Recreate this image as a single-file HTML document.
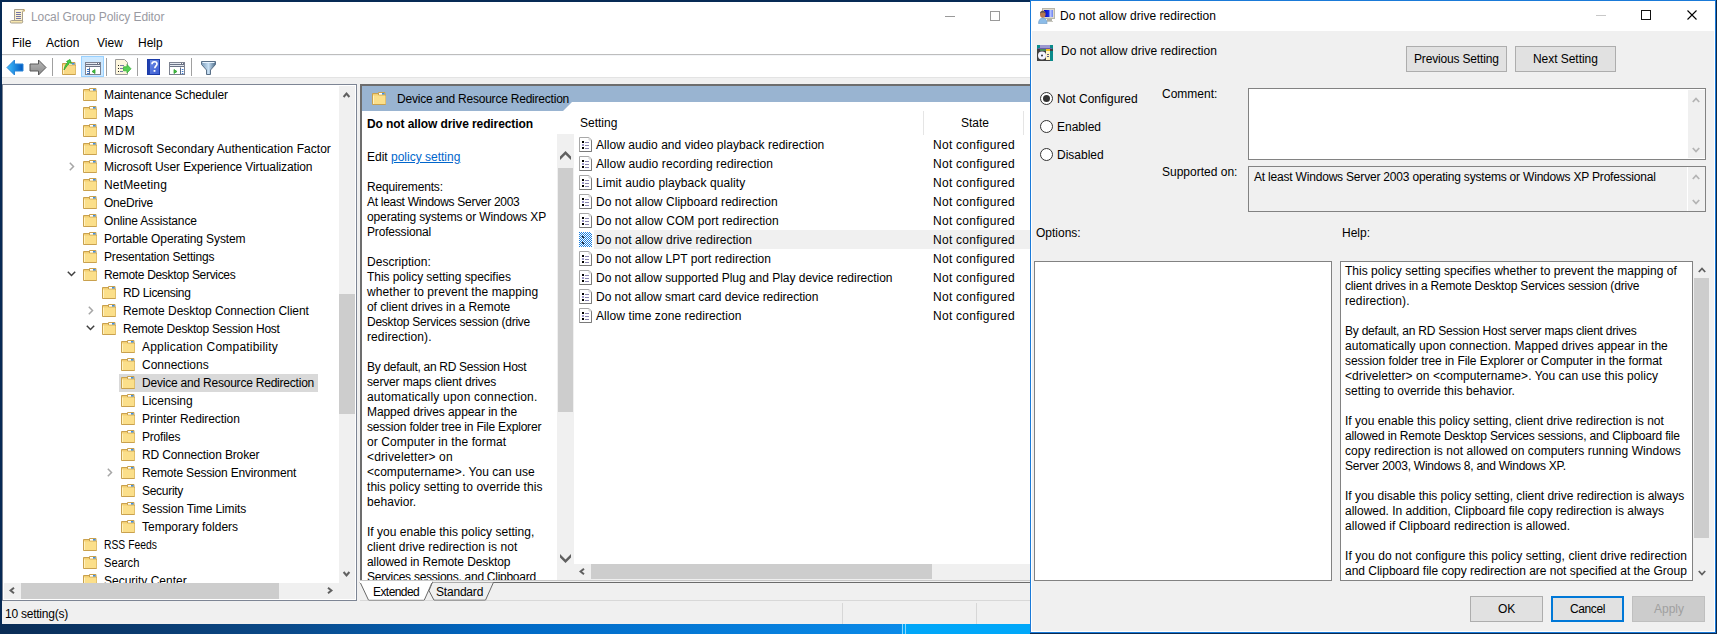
<!DOCTYPE html><html><head><meta charset="utf-8"><title>Local Group Policy Editor</title><style>
*{margin:0;padding:0;box-sizing:border-box}
html,body{width:1717px;height:634px;overflow:hidden;background:#0b3a6e}
body{position:relative;font-family:"Liberation Sans",sans-serif;font-size:12px;color:#000}
div,svg{position:absolute}
svg{overflow:visible}
.t{white-space:nowrap;line-height:15px;font-size:12px}
</style></head><body>
<div style="left:0px;top:624px;width:1717px;height:10px;background:linear-gradient(90deg,#0a2c55 0px,#0a4a8a 290px,#0068c4 500px,#0a8ae8 900px,#00a6f8 904px,#00b0ff 1717px)"></div>
<div style="left:902px;top:624px;width:1px;height:10px;background:#8ad8ff"></div>
<div style="left:905px;top:624px;width:1px;height:10px;background:#8ad8ff"></div>
<div style="left:0px;top:0px;width:1030px;height:2px;background:#072a55"></div>
<div style="left:0px;top:0px;width:2px;height:624px;background:#072a55"></div>
<div style="left:2px;top:2px;width:1028px;height:622px;background:#fff"></div>
<div class="t" style="left:31px;top:10px;letter-spacing:-0.083px;color:#999aa2">Local Group Policy Editor</div>
<svg style="left:10px;top:8px;" width="16" height="16" viewBox="0 0 16 16"><path d="M4.5 1.5h9.5l-1.5 2v9.5h-8z" fill="#fbf2d0" stroke="#a89f8c"/><path d="M13.5 1.5a1 1 0 0 1 0 2" fill="none" stroke="#c8a040"/><path d="M1.5 12.5h10a1.2 1.2 0 0 1 0 2.5h-10a1.2 1.2 0 0 1 0-2.5z" fill="#f8e8b0" stroke="#a89f8c"/><path d="M6 4.5h5M6 6.5h5M6 8.5h5M6 10.5h5" stroke="#7474a8" stroke-width="1"/></svg>
<div style="left:945px;top:16px;width:10px;height:1px;background:#999"></div>
<div style="left:990px;top:11px;width:10px;height:10px;border:1px solid #999"></div>
<div class="t" style="left:12px;top:36px;">File</div>
<div class="t" style="left:46px;top:36px;">Action</div>
<div class="t" style="left:97px;top:36px;">View</div>
<div class="t" style="left:138px;top:36px;">Help</div>
<div style="left:2px;top:54px;width:1028px;height:1px;background:#bdbdbd"></div>
<div style="left:2px;top:55px;width:1028px;height:1px;background:#f3f5f8"></div>
<svg style="left:6px;top:59px;" width="18" height="17" viewBox="0 0 18 17"><defs><linearGradient id="gb" x1="0" y1="0" x2="1" y2="0"><stop offset="0" stop-color="#40c0ff"/><stop offset="1" stop-color="#0058c0"/></linearGradient></defs><path d="M1 8.5L8.5 1V5H17V12H8.5V16z" fill="url(#gb)" stroke="#2a86d8" stroke-linejoin="miter"/></svg>
<svg style="left:29px;top:59px;" width="18" height="17" viewBox="0 0 18 17"><defs><linearGradient id="gg" x1="0" y1="0" x2="0" y2="1"><stop offset="0" stop-color="#b8b8b8"/><stop offset="1" stop-color="#8a8a8a"/></linearGradient></defs><path d="M17 8.5L9.5 1V5H1V12H9.5V16z" fill="url(#gg)" stroke="#5a5a5a"/></svg>
<div style="left:52px;top:58px;width:1px;height:18px;background:#a0a0a0"></div>
<svg style="left:62px;top:60px;transform:translate(0,2px)" width="15" height="15" viewBox="0 0 15 15"><path d="M0.5 1.5h5.5l1 1.5h6.5v9.5h-13z" fill="#f3cf73" stroke="#c9a14e"/><path d="M6.5 0.5h6.5v2.5h-6.5z" fill="#f7e3a8" stroke="#c9a14e"/><rect x="7" y="1" width="3" height="1.5" fill="#fff"/><rect x="10" y="1" width="2.5" height="1.5" fill="#3d8fe6"/><rect x="1" y="3.5" width="12.5" height="8.5" fill="#f9d985"/><rect x="1" y="3.5" width="1" height="8.5" fill="#fff2c0"/></svg>
<svg style="left:62px;top:59px;" width="10" height="12" viewBox="0 0 10 12"><path d="M2 11C3 6 5 4 6 3L4.5 2.5L8 0.5L9.5 4.5L7.5 3.8C6.5 5 4.5 7.5 2 11z" fill="#44d044" stroke="#2aa02a" stroke-width="0.8"/></svg>
<div style="left:81px;top:56px;width:23px;height:21px;background:#cce8ff;border:1px solid #99d1ff"></div>
<svg style="left:85px;top:62px;" width="16" height="13" viewBox="0 0 16 13"><rect x="0.5" y="0.5" width="15" height="12" fill="#fff" stroke="#7d8290"/><path d="M1 1.5h10M1 3.5h14" stroke="#e4e8f0"/><path d="M1 2.5h14M1 4.5h14" stroke="#6a7284"/><rect x="12" y="1" width="1" height="1" fill="#6a7284"/><rect x="14" y="1" width="1" height="1" fill="#6a7284"/><path d="M4.5 5.5v7" stroke="#5a6a88"/><path d="M2 7.5h2M2 9.5h2M2 11.5h2" stroke="#3a7ad0" stroke-width="1.2"/><path d="M10 7.5v4l-3-2z" fill="#40c040" stroke="#30a030" stroke-width="0.8"/></svg>
<div style="left:106px;top:58px;width:1px;height:18px;background:#a0a0a0"></div>
<svg style="left:115px;top:59px;" width="17" height="16" viewBox="0 0 17 16"><path d="M0.5 0.5h9l3 3v12h-12z" fill="#fdf6dc" stroke="#9a9a9a"/><path d="M3 6.5h1M3 9.5h1M3 12.5h1" stroke="#202020"/><path d="M5 6.5h4M5 9.5h3M5 12.5h3" stroke="#7a7aa8"/><path d="M8.5 9V7.8L12 7.8V5.5L16 9.8L12 14V11.8H8.5z" fill="#55d055" stroke="#3ab03a" stroke-width="0.8"/></svg>
<div style="left:137px;top:58px;width:1px;height:18px;background:#a0a0a0"></div>
<svg style="left:147px;top:59px;" width="13" height="16" viewBox="0 0 13 16"><defs><linearGradient id="hb" x1="0" y1="0" x2="1" y2="1"><stop offset="0" stop-color="#7090e8"/><stop offset="1" stop-color="#3a5ad0"/></linearGradient></defs><rect x="0.5" y="0.5" width="12" height="15" fill="url(#hb)" stroke="#1a3aa8"/><rect x="1" y="1" width="2" height="14" fill="#2040b0"/><path d="M5 5.2c0-1.6 1.2-2.4 2.5-2.4s2.5 0.8 2.5 2.2c0 1.8-2.2 2-2.2 4.2" fill="none" stroke="#fff" stroke-width="1.6"/><rect x="6.6" y="11" width="1.8" height="1.8" fill="#fff"/></svg>
<svg style="left:169px;top:62px;" width="16" height="13" viewBox="0 0 16 13"><rect x="0.5" y="0.5" width="15" height="12" fill="#fff" stroke="#7d8290"/><path d="M1 1.5h10M1 3.5h14" stroke="#e4e8f0"/><path d="M1 2.5h14M1 4.5h14" stroke="#6a7284"/><rect x="12" y="1" width="1" height="1" fill="#6a7284"/><rect x="14" y="1" width="1" height="1" fill="#6a7284"/><path d="M11.5 5.5v7" stroke="#5a6a88"/><path d="M12.8 7.5h1.6M12.8 9.5h1.6M12.8 11.5h1.6" stroke="#3a7ad0" stroke-width="1.2"/><path d="M5 7.5v4l3-2z" fill="#40c040" stroke="#30a030" stroke-width="0.8"/></svg>
<div style="left:191px;top:58px;width:1px;height:18px;background:#a0a0a0"></div>
<svg style="left:201px;top:61px;" width="15" height="14" viewBox="0 0 15 14"><defs><linearGradient id="fb" x1="0" y1="0" x2="1" y2="0"><stop offset="0" stop-color="#7a9ab8"/><stop offset="0.5" stop-color="#c8e0f4"/><stop offset="1" stop-color="#4a6a88"/></linearGradient></defs><path d="M0.5 0.5h14v3l-5 5.5v4.5h-4v-4.5l-5-5.5z" fill="url(#fb)" stroke="#5a7088"/><path d="M1.5 1.5h12" stroke="#e8f4ff"/></svg>
<div style="left:2px;top:77px;width:1028px;height:1px;background:#e3e3e3"></div>
<div style="left:2px;top:78px;width:1028px;height:6px;background:#f0f0f0"></div>
<div style="left:2px;top:84px;width:355px;height:517px;background:#fff;border:1px solid #7d8594"></div>
<div style="left:2px;top:85px;width:337px;height:498px;overflow:hidden">
<svg style="left:81px;top:3px" width="14" height="13" viewBox="0 0 14 13"><path d="M0.5 1.5h5.5l1 1.5h6.5v9.5h-13z" fill="#f3cf73" stroke="#c9a14e"/><path d="M6.5 0.5h6.5v2.5h-6.5z" fill="#f7e3a8" stroke="#c9a14e"/><rect x="7" y="1" width="3" height="1.5" fill="#fff"/><rect x="10" y="1" width="2.5" height="1.5" fill="#3d8fe6"/><rect x="1" y="3.5" width="12.5" height="8.5" fill="#fbdf8a"/><rect x="1" y="3.5" width="1" height="8.5" fill="#fff2c0"/></svg>
<div class="t" style="left:102px;top:3px;letter-spacing:-0.100px;">Maintenance Scheduler</div>
<svg style="left:81px;top:21px" width="14" height="13" viewBox="0 0 14 13"><path d="M0.5 1.5h5.5l1 1.5h6.5v9.5h-13z" fill="#f3cf73" stroke="#c9a14e"/><path d="M6.5 0.5h6.5v2.5h-6.5z" fill="#f7e3a8" stroke="#c9a14e"/><rect x="7" y="1" width="3" height="1.5" fill="#fff"/><rect x="10" y="1" width="2.5" height="1.5" fill="#3d8fe6"/><rect x="1" y="3.5" width="12.5" height="8.5" fill="#fbdf8a"/><rect x="1" y="3.5" width="1" height="8.5" fill="#fff2c0"/></svg>
<div class="t" style="left:102px;top:21px;letter-spacing:-0.001px;">Maps</div>
<svg style="left:81px;top:39px" width="14" height="13" viewBox="0 0 14 13"><path d="M0.5 1.5h5.5l1 1.5h6.5v9.5h-13z" fill="#f3cf73" stroke="#c9a14e"/><path d="M6.5 0.5h6.5v2.5h-6.5z" fill="#f7e3a8" stroke="#c9a14e"/><rect x="7" y="1" width="3" height="1.5" fill="#fff"/><rect x="10" y="1" width="2.5" height="1.5" fill="#3d8fe6"/><rect x="1" y="3.5" width="12.5" height="8.5" fill="#fbdf8a"/><rect x="1" y="3.5" width="1" height="8.5" fill="#fff2c0"/></svg>
<div class="t" style="left:102px;top:39px;letter-spacing:1.000px;">MDM</div>
<svg style="left:81px;top:57px" width="14" height="13" viewBox="0 0 14 13"><path d="M0.5 1.5h5.5l1 1.5h6.5v9.5h-13z" fill="#f3cf73" stroke="#c9a14e"/><path d="M6.5 0.5h6.5v2.5h-6.5z" fill="#f7e3a8" stroke="#c9a14e"/><rect x="7" y="1" width="3" height="1.5" fill="#fff"/><rect x="10" y="1" width="2.5" height="1.5" fill="#3d8fe6"/><rect x="1" y="3.5" width="12.5" height="8.5" fill="#fbdf8a"/><rect x="1" y="3.5" width="1" height="8.5" fill="#fff2c0"/></svg>
<div class="t" style="left:102px;top:57px;letter-spacing:0.035px;">Microsoft Secondary Authentication Factor</div>
<svg style="left:81px;top:75px" width="14" height="13" viewBox="0 0 14 13"><path d="M0.5 1.5h5.5l1 1.5h6.5v9.5h-13z" fill="#f3cf73" stroke="#c9a14e"/><path d="M6.5 0.5h6.5v2.5h-6.5z" fill="#f7e3a8" stroke="#c9a14e"/><rect x="7" y="1" width="3" height="1.5" fill="#fff"/><rect x="10" y="1" width="2.5" height="1.5" fill="#3d8fe6"/><rect x="1" y="3.5" width="12.5" height="8.5" fill="#fbdf8a"/><rect x="1" y="3.5" width="1" height="8.5" fill="#fff2c0"/></svg>
<div class="t" style="left:102px;top:75px;letter-spacing:-0.103px;">Microsoft User Experience Virtualization</div>
<svg style="left:67px;top:77px" width="6" height="9" viewBox="0 0 6 9"><path d="M0.8 0.8L4.5 4.5L0.8 8.2" fill="none" stroke="#a6a6a6" stroke-width="1.5"/></svg>
<svg style="left:81px;top:93px" width="14" height="13" viewBox="0 0 14 13"><path d="M0.5 1.5h5.5l1 1.5h6.5v9.5h-13z" fill="#f3cf73" stroke="#c9a14e"/><path d="M6.5 0.5h6.5v2.5h-6.5z" fill="#f7e3a8" stroke="#c9a14e"/><rect x="7" y="1" width="3" height="1.5" fill="#fff"/><rect x="10" y="1" width="2.5" height="1.5" fill="#3d8fe6"/><rect x="1" y="3.5" width="12.5" height="8.5" fill="#fbdf8a"/><rect x="1" y="3.5" width="1" height="8.5" fill="#fff2c0"/></svg>
<div class="t" style="left:102px;top:93px;letter-spacing:0.165px;">NetMeeting</div>
<svg style="left:81px;top:111px" width="14" height="13" viewBox="0 0 14 13"><path d="M0.5 1.5h5.5l1 1.5h6.5v9.5h-13z" fill="#f3cf73" stroke="#c9a14e"/><path d="M6.5 0.5h6.5v2.5h-6.5z" fill="#f7e3a8" stroke="#c9a14e"/><rect x="7" y="1" width="3" height="1.5" fill="#fff"/><rect x="10" y="1" width="2.5" height="1.5" fill="#3d8fe6"/><rect x="1" y="3.5" width="12.5" height="8.5" fill="#fbdf8a"/><rect x="1" y="3.5" width="1" height="8.5" fill="#fff2c0"/></svg>
<div class="t" style="left:102px;top:111px;letter-spacing:-0.215px;">OneDrive</div>
<svg style="left:81px;top:129px" width="14" height="13" viewBox="0 0 14 13"><path d="M0.5 1.5h5.5l1 1.5h6.5v9.5h-13z" fill="#f3cf73" stroke="#c9a14e"/><path d="M6.5 0.5h6.5v2.5h-6.5z" fill="#f7e3a8" stroke="#c9a14e"/><rect x="7" y="1" width="3" height="1.5" fill="#fff"/><rect x="10" y="1" width="2.5" height="1.5" fill="#3d8fe6"/><rect x="1" y="3.5" width="12.5" height="8.5" fill="#fbdf8a"/><rect x="1" y="3.5" width="1" height="8.5" fill="#fff2c0"/></svg>
<div class="t" style="left:102px;top:129px;letter-spacing:-0.155px;">Online Assistance</div>
<svg style="left:81px;top:147px" width="14" height="13" viewBox="0 0 14 13"><path d="M0.5 1.5h5.5l1 1.5h6.5v9.5h-13z" fill="#f3cf73" stroke="#c9a14e"/><path d="M6.5 0.5h6.5v2.5h-6.5z" fill="#f7e3a8" stroke="#c9a14e"/><rect x="7" y="1" width="3" height="1.5" fill="#fff"/><rect x="10" y="1" width="2.5" height="1.5" fill="#3d8fe6"/><rect x="1" y="3.5" width="12.5" height="8.5" fill="#fbdf8a"/><rect x="1" y="3.5" width="1" height="8.5" fill="#fff2c0"/></svg>
<div class="t" style="left:102px;top:147px;letter-spacing:-0.104px;">Portable Operating System</div>
<svg style="left:81px;top:165px" width="14" height="13" viewBox="0 0 14 13"><path d="M0.5 1.5h5.5l1 1.5h6.5v9.5h-13z" fill="#f3cf73" stroke="#c9a14e"/><path d="M6.5 0.5h6.5v2.5h-6.5z" fill="#f7e3a8" stroke="#c9a14e"/><rect x="7" y="1" width="3" height="1.5" fill="#fff"/><rect x="10" y="1" width="2.5" height="1.5" fill="#3d8fe6"/><rect x="1" y="3.5" width="12.5" height="8.5" fill="#fbdf8a"/><rect x="1" y="3.5" width="1" height="8.5" fill="#fff2c0"/></svg>
<div class="t" style="left:102px;top:165px;letter-spacing:-0.175px;">Presentation Settings</div>
<svg style="left:81px;top:183px" width="14" height="13" viewBox="0 0 14 13"><path d="M0.5 1.5h5.5l1 1.5h6.5v9.5h-13z" fill="#f3cf73" stroke="#c9a14e"/><path d="M6.5 0.5h6.5v2.5h-6.5z" fill="#f7e3a8" stroke="#c9a14e"/><rect x="7" y="1" width="3" height="1.5" fill="#fff"/><rect x="10" y="1" width="2.5" height="1.5" fill="#3d8fe6"/><rect x="1" y="3.5" width="12.5" height="8.5" fill="#fbdf8a"/><rect x="1" y="3.5" width="1" height="8.5" fill="#fff2c0"/></svg>
<div class="t" style="left:102px;top:183px;letter-spacing:-0.318px;">Remote Desktop Services</div>
<svg style="left:65px;top:186px" width="9" height="6" viewBox="0 0 9 6"><path d="M0.8 0.8L4.5 4.5L8.2 0.8" fill="none" stroke="#404040" stroke-width="1.5"/></svg>
<svg style="left:100px;top:201px" width="14" height="13" viewBox="0 0 14 13"><path d="M0.5 1.5h5.5l1 1.5h6.5v9.5h-13z" fill="#f3cf73" stroke="#c9a14e"/><path d="M6.5 0.5h6.5v2.5h-6.5z" fill="#f7e3a8" stroke="#c9a14e"/><rect x="7" y="1" width="3" height="1.5" fill="#fff"/><rect x="10" y="1" width="2.5" height="1.5" fill="#3d8fe6"/><rect x="1" y="3.5" width="12.5" height="8.5" fill="#fbdf8a"/><rect x="1" y="3.5" width="1" height="8.5" fill="#fff2c0"/></svg>
<div class="t" style="left:121px;top:201px;letter-spacing:-0.318px;">RD Licensing</div>
<svg style="left:100px;top:219px" width="14" height="13" viewBox="0 0 14 13"><path d="M0.5 1.5h5.5l1 1.5h6.5v9.5h-13z" fill="#f3cf73" stroke="#c9a14e"/><path d="M6.5 0.5h6.5v2.5h-6.5z" fill="#f7e3a8" stroke="#c9a14e"/><rect x="7" y="1" width="3" height="1.5" fill="#fff"/><rect x="10" y="1" width="2.5" height="1.5" fill="#3d8fe6"/><rect x="1" y="3.5" width="12.5" height="8.5" fill="#fbdf8a"/><rect x="1" y="3.5" width="1" height="8.5" fill="#fff2c0"/></svg>
<div class="t" style="left:121px;top:219px;letter-spacing:-0.049px;">Remote Desktop Connection Client</div>
<svg style="left:86px;top:221px" width="6" height="9" viewBox="0 0 6 9"><path d="M0.8 0.8L4.5 4.5L0.8 8.2" fill="none" stroke="#a6a6a6" stroke-width="1.5"/></svg>
<svg style="left:100px;top:237px" width="14" height="13" viewBox="0 0 14 13"><path d="M0.5 1.5h5.5l1 1.5h6.5v9.5h-13z" fill="#f3cf73" stroke="#c9a14e"/><path d="M6.5 0.5h6.5v2.5h-6.5z" fill="#f7e3a8" stroke="#c9a14e"/><rect x="7" y="1" width="3" height="1.5" fill="#fff"/><rect x="10" y="1" width="2.5" height="1.5" fill="#3d8fe6"/><rect x="1" y="3.5" width="12.5" height="8.5" fill="#fbdf8a"/><rect x="1" y="3.5" width="1" height="8.5" fill="#fff2c0"/></svg>
<div class="t" style="left:121px;top:237px;letter-spacing:-0.250px;">Remote Desktop Session Host</div>
<svg style="left:84px;top:240px" width="9" height="6" viewBox="0 0 9 6"><path d="M0.8 0.8L4.5 4.5L8.2 0.8" fill="none" stroke="#404040" stroke-width="1.5"/></svg>
<svg style="left:119px;top:255px" width="14" height="13" viewBox="0 0 14 13"><path d="M0.5 1.5h5.5l1 1.5h6.5v9.5h-13z" fill="#f3cf73" stroke="#c9a14e"/><path d="M6.5 0.5h6.5v2.5h-6.5z" fill="#f7e3a8" stroke="#c9a14e"/><rect x="7" y="1" width="3" height="1.5" fill="#fff"/><rect x="10" y="1" width="2.5" height="1.5" fill="#3d8fe6"/><rect x="1" y="3.5" width="12.5" height="8.5" fill="#fbdf8a"/><rect x="1" y="3.5" width="1" height="8.5" fill="#fff2c0"/></svg>
<div class="t" style="left:140px;top:255px;letter-spacing:0.208px;">Application Compatibility</div>
<svg style="left:119px;top:273px" width="14" height="13" viewBox="0 0 14 13"><path d="M0.5 1.5h5.5l1 1.5h6.5v9.5h-13z" fill="#f3cf73" stroke="#c9a14e"/><path d="M6.5 0.5h6.5v2.5h-6.5z" fill="#f7e3a8" stroke="#c9a14e"/><rect x="7" y="1" width="3" height="1.5" fill="#fff"/><rect x="10" y="1" width="2.5" height="1.5" fill="#3d8fe6"/><rect x="1" y="3.5" width="12.5" height="8.5" fill="#fbdf8a"/><rect x="1" y="3.5" width="1" height="8.5" fill="#fff2c0"/></svg>
<div class="t" style="left:140px;top:273px;">Connections</div>
<div style="left:117px;top:289px;width:199px;height:18px;background:#d9d9d9"></div>
<svg style="left:119px;top:291px" width="14" height="13" viewBox="0 0 14 13"><path d="M0.5 1.5h5.5l1 1.5h6.5v9.5h-13z" fill="#f3cf73" stroke="#c9a14e"/><path d="M6.5 0.5h6.5v2.5h-6.5z" fill="#f7e3a8" stroke="#c9a14e"/><rect x="7" y="1" width="3" height="1.5" fill="#fff"/><rect x="10" y="1" width="2.5" height="1.5" fill="#3d8fe6"/><rect x="1" y="3.5" width="12.5" height="8.5" fill="#fbdf8a"/><rect x="1" y="3.5" width="1" height="8.5" fill="#fff2c0"/></svg>
<div class="t" style="left:140px;top:291px;letter-spacing:-0.216px;">Device and Resource Redirection</div>
<svg style="left:119px;top:309px" width="14" height="13" viewBox="0 0 14 13"><path d="M0.5 1.5h5.5l1 1.5h6.5v9.5h-13z" fill="#f3cf73" stroke="#c9a14e"/><path d="M6.5 0.5h6.5v2.5h-6.5z" fill="#f7e3a8" stroke="#c9a14e"/><rect x="7" y="1" width="3" height="1.5" fill="#fff"/><rect x="10" y="1" width="2.5" height="1.5" fill="#3d8fe6"/><rect x="1" y="3.5" width="12.5" height="8.5" fill="#fbdf8a"/><rect x="1" y="3.5" width="1" height="8.5" fill="#fff2c0"/></svg>
<div class="t" style="left:140px;top:309px;">Licensing</div>
<svg style="left:119px;top:327px" width="14" height="13" viewBox="0 0 14 13"><path d="M0.5 1.5h5.5l1 1.5h6.5v9.5h-13z" fill="#f3cf73" stroke="#c9a14e"/><path d="M6.5 0.5h6.5v2.5h-6.5z" fill="#f7e3a8" stroke="#c9a14e"/><rect x="7" y="1" width="3" height="1.5" fill="#fff"/><rect x="10" y="1" width="2.5" height="1.5" fill="#3d8fe6"/><rect x="1" y="3.5" width="12.5" height="8.5" fill="#fbdf8a"/><rect x="1" y="3.5" width="1" height="8.5" fill="#fff2c0"/></svg>
<div class="t" style="left:140px;top:327px;letter-spacing:-0.084px;">Printer Redirection</div>
<svg style="left:119px;top:345px" width="14" height="13" viewBox="0 0 14 13"><path d="M0.5 1.5h5.5l1 1.5h6.5v9.5h-13z" fill="#f3cf73" stroke="#c9a14e"/><path d="M6.5 0.5h6.5v2.5h-6.5z" fill="#f7e3a8" stroke="#c9a14e"/><rect x="7" y="1" width="3" height="1.5" fill="#fff"/><rect x="10" y="1" width="2.5" height="1.5" fill="#3d8fe6"/><rect x="1" y="3.5" width="12.5" height="8.5" fill="#fbdf8a"/><rect x="1" y="3.5" width="1" height="8.5" fill="#fff2c0"/></svg>
<div class="t" style="left:140px;top:345px;letter-spacing:-0.214px;">Profiles</div>
<svg style="left:119px;top:363px" width="14" height="13" viewBox="0 0 14 13"><path d="M0.5 1.5h5.5l1 1.5h6.5v9.5h-13z" fill="#f3cf73" stroke="#c9a14e"/><path d="M6.5 0.5h6.5v2.5h-6.5z" fill="#f7e3a8" stroke="#c9a14e"/><rect x="7" y="1" width="3" height="1.5" fill="#fff"/><rect x="10" y="1" width="2.5" height="1.5" fill="#3d8fe6"/><rect x="1" y="3.5" width="12.5" height="8.5" fill="#fbdf8a"/><rect x="1" y="3.5" width="1" height="8.5" fill="#fff2c0"/></svg>
<div class="t" style="left:140px;top:363px;letter-spacing:-0.131px;">RD Connection Broker</div>
<svg style="left:119px;top:381px" width="14" height="13" viewBox="0 0 14 13"><path d="M0.5 1.5h5.5l1 1.5h6.5v9.5h-13z" fill="#f3cf73" stroke="#c9a14e"/><path d="M6.5 0.5h6.5v2.5h-6.5z" fill="#f7e3a8" stroke="#c9a14e"/><rect x="7" y="1" width="3" height="1.5" fill="#fff"/><rect x="10" y="1" width="2.5" height="1.5" fill="#3d8fe6"/><rect x="1" y="3.5" width="12.5" height="8.5" fill="#fbdf8a"/><rect x="1" y="3.5" width="1" height="8.5" fill="#fff2c0"/></svg>
<div class="t" style="left:140px;top:381px;letter-spacing:-0.180px;">Remote Session Environment</div>
<svg style="left:105px;top:383px" width="6" height="9" viewBox="0 0 6 9"><path d="M0.8 0.8L4.5 4.5L0.8 8.2" fill="none" stroke="#a6a6a6" stroke-width="1.5"/></svg>
<svg style="left:119px;top:399px" width="14" height="13" viewBox="0 0 14 13"><path d="M0.5 1.5h5.5l1 1.5h6.5v9.5h-13z" fill="#f3cf73" stroke="#c9a14e"/><path d="M6.5 0.5h6.5v2.5h-6.5z" fill="#f7e3a8" stroke="#c9a14e"/><rect x="7" y="1" width="3" height="1.5" fill="#fff"/><rect x="10" y="1" width="2.5" height="1.5" fill="#3d8fe6"/><rect x="1" y="3.5" width="12.5" height="8.5" fill="#fbdf8a"/><rect x="1" y="3.5" width="1" height="8.5" fill="#fff2c0"/></svg>
<div class="t" style="left:140px;top:399px;letter-spacing:-0.285px;">Security</div>
<svg style="left:119px;top:417px" width="14" height="13" viewBox="0 0 14 13"><path d="M0.5 1.5h5.5l1 1.5h6.5v9.5h-13z" fill="#f3cf73" stroke="#c9a14e"/><path d="M6.5 0.5h6.5v2.5h-6.5z" fill="#f7e3a8" stroke="#c9a14e"/><rect x="7" y="1" width="3" height="1.5" fill="#fff"/><rect x="10" y="1" width="2.5" height="1.5" fill="#3d8fe6"/><rect x="1" y="3.5" width="12.5" height="8.5" fill="#fbdf8a"/><rect x="1" y="3.5" width="1" height="8.5" fill="#fff2c0"/></svg>
<div class="t" style="left:140px;top:417px;letter-spacing:-0.140px;">Session Time Limits</div>
<svg style="left:119px;top:435px" width="14" height="13" viewBox="0 0 14 13"><path d="M0.5 1.5h5.5l1 1.5h6.5v9.5h-13z" fill="#f3cf73" stroke="#c9a14e"/><path d="M6.5 0.5h6.5v2.5h-6.5z" fill="#f7e3a8" stroke="#c9a14e"/><rect x="7" y="1" width="3" height="1.5" fill="#fff"/><rect x="10" y="1" width="2.5" height="1.5" fill="#3d8fe6"/><rect x="1" y="3.5" width="12.5" height="8.5" fill="#fbdf8a"/><rect x="1" y="3.5" width="1" height="8.5" fill="#fff2c0"/></svg>
<div class="t" style="left:140px;top:435px;letter-spacing:0.002px;">Temporary folders</div>
<svg style="left:81px;top:453px" width="14" height="13" viewBox="0 0 14 13"><path d="M0.5 1.5h5.5l1 1.5h6.5v9.5h-13z" fill="#f3cf73" stroke="#c9a14e"/><path d="M6.5 0.5h6.5v2.5h-6.5z" fill="#f7e3a8" stroke="#c9a14e"/><rect x="7" y="1" width="3" height="1.5" fill="#fff"/><rect x="10" y="1" width="2.5" height="1.5" fill="#3d8fe6"/><rect x="1" y="3.5" width="12.5" height="8.5" fill="#fbdf8a"/><rect x="1" y="3.5" width="1" height="8.5" fill="#fff2c0"/></svg>
<div class="t" style="left:102px;top:453px;transform:scaleX(0.862);transform-origin:0 0;">RSS Feeds</div>
<svg style="left:81px;top:471px" width="14" height="13" viewBox="0 0 14 13"><path d="M0.5 1.5h5.5l1 1.5h6.5v9.5h-13z" fill="#f3cf73" stroke="#c9a14e"/><path d="M6.5 0.5h6.5v2.5h-6.5z" fill="#f7e3a8" stroke="#c9a14e"/><rect x="7" y="1" width="3" height="1.5" fill="#fff"/><rect x="10" y="1" width="2.5" height="1.5" fill="#3d8fe6"/><rect x="1" y="3.5" width="12.5" height="8.5" fill="#fbdf8a"/><rect x="1" y="3.5" width="1" height="8.5" fill="#fff2c0"/></svg>
<div class="t" style="left:102px;top:471px;transform:scaleX(0.93);transform-origin:0 0;">Search</div>
<svg style="left:81px;top:489px" width="14" height="13" viewBox="0 0 14 13"><path d="M0.5 1.5h5.5l1 1.5h6.5v9.5h-13z" fill="#f3cf73" stroke="#c9a14e"/><path d="M6.5 0.5h6.5v2.5h-6.5z" fill="#f7e3a8" stroke="#c9a14e"/><rect x="7" y="1" width="3" height="1.5" fill="#fff"/><rect x="10" y="1" width="2.5" height="1.5" fill="#3d8fe6"/><rect x="1" y="3.5" width="12.5" height="8.5" fill="#fbdf8a"/><rect x="1" y="3.5" width="1" height="8.5" fill="#fff2c0"/></svg>
<div class="t" style="left:102px;top:489px;">Security Center</div>
</div>
<div style="left:339px;top:86px;width:16px;height:497px;background:#f0f0f0"></div>
<div style="left:339px;top:294px;width:16px;height:120px;background:#cdcdcd"></div>
<svg style="left:343px;top:92px;" width="7" height="6" viewBox="0 0 7 6"><path d="M0.6 5L3.5 1.5L6.4 5" fill="none" stroke="#606060" stroke-width="2"/></svg>
<svg style="left:343px;top:571px;" width="7" height="6" viewBox="0 0 7 6"><path d="M0.6 1L3.5 4.5L6.4 1" fill="none" stroke="#606060" stroke-width="2"/></svg>
<div style="left:4px;top:583px;width:351px;height:16px;background:#f0f0f0"></div>
<div style="left:21px;top:583px;width:258px;height:16px;background:#cdcdcd"></div>
<svg style="left:9px;top:587px;" width="6" height="7" viewBox="0 0 6 7"><path d="M5 0.8L1.6 3.5L5 6.2" fill="none" stroke="#606060" stroke-width="2"/></svg>
<svg style="left:327px;top:587px;" width="6" height="7" viewBox="0 0 6 7"><path d="M1 0.8L4.4 3.5L1 6.2" fill="none" stroke="#606060" stroke-width="2"/></svg>
<div style="left:357px;top:84px;width:3px;height:517px;background:#f0f0f0"></div>
<div style="left:360px;top:84px;width:670px;height:496px;background:#fff;border-left:2px solid #6d6d6d;border-top:2px solid #6d6d6d"></div>
<svg style="left:362px;top:86px;" width="668" height="25" viewBox="0 0 668 25"><path d="M0 0H668V16H210L201 25H0z" fill="#99b4d1"/></svg>
<svg style="left:372px;top:92px;" width="14" height="13" viewBox="0 0 14 13"><path d="M0.5 1.5h5.5l1 1.5h6.5v9.5h-13z" fill="#f3cf73" stroke="#c9a14e"/><path d="M6.5 0.5h6.5v2.5h-6.5z" fill="#f7e3a8" stroke="#c9a14e"/><rect x="7" y="1" width="3" height="1.5" fill="#fff"/><rect x="10" y="1" width="2.5" height="1.5" fill="#3d8fe6"/><rect x="1" y="3.5" width="12.5" height="8.5" fill="#fbdf8a"/><rect x="1" y="3.5" width="1" height="8.5" fill="#fff2c0"/></svg>
<div class="t" style="left:397px;top:92px;letter-spacing:-0.216px;">Device and Resource Redirection</div>
<div class="t" style="left:367px;top:117px;letter-spacing:0.042px;font-weight:bold;letter-spacing:-0.09px">Do not allow drive redirection</div>
<div style="left:362px;top:111px;width:195px;height:469px;overflow:hidden">
<div class="t" style="left:5px;top:39px;">Edit <span style="color:#0066cc;text-decoration:underline">policy setting</span></div>
<div class="t" style="left:5px;top:69px;letter-spacing:-0.167px;">Requirements:</div>
<div class="t" style="left:5px;top:84px;letter-spacing:-0.295px;">At least Windows Server 2003</div>
<div class="t" style="left:5px;top:99px;letter-spacing:-0.116px;">operating systems or Windows XP</div>
<div class="t" style="left:5px;top:114px;letter-spacing:-0.181px;">Professional</div>
<div class="t" style="left:5px;top:144px;letter-spacing:0.045px;">Description:</div>
<div class="t" style="left:5px;top:159px;letter-spacing:-0.054px;">This policy setting specifies</div>
<div class="t" style="left:5px;top:174px;letter-spacing:0.086px;">whether to prevent the mapping</div>
<div class="t" style="left:5px;top:189px;letter-spacing:-0.057px;">of client drives in a Remote</div>
<div class="t" style="left:5px;top:204px;letter-spacing:-0.250px;">Desktop Services session (drive</div>
<div class="t" style="left:5px;top:219px;letter-spacing:0.099px;">redirection).</div>
<div class="t" style="left:5px;top:249px;letter-spacing:-0.293px;">By default, an RD Session Host</div>
<div class="t" style="left:5px;top:264px;letter-spacing:-0.148px;">server maps client drives</div>
<div class="t" style="left:5px;top:279px;letter-spacing:0.191px;">automatically upon connection.</div>
<div class="t" style="left:5px;top:294px;letter-spacing:-0.076px;">Mapped drives appear in the</div>
<div class="t" style="left:5px;top:309px;letter-spacing:-0.201px;">session folder tree in File Explorer</div>
<div class="t" style="left:5px;top:324px;letter-spacing:0.102px;">or Computer in the format</div>
<div class="t" style="left:5px;top:339px;letter-spacing:0.146px;">&lt;driveletter&gt; on</div>
<div class="t" style="left:5px;top:354px;letter-spacing:0.061px;">&lt;computername&gt;. You can use</div>
<div class="t" style="left:5px;top:369px;letter-spacing:0.058px;">this policy setting to override this</div>
<div class="t" style="left:5px;top:384px;letter-spacing:0.062px;">behavior.</div>
<div class="t" style="left:5px;top:414px;letter-spacing:0.015px;">If you enable this policy setting,</div>
<div class="t" style="left:5px;top:429px;letter-spacing:0.051px;">client drive redirection is not</div>
<div class="t" style="left:5px;top:444px;letter-spacing:-0.106px;">allowed in Remote Desktop</div>
<div class="t" style="left:5px;top:459px;letter-spacing:-0.270px;">Services sessions, and Clipboard</div>
</div>
<div style="left:557px;top:134px;width:17px;height:446px;background:#f0f0f0"></div>
<div style="left:558px;top:168px;width:15px;height:244px;background:#cdcdcd"></div>
<svg style="left:560px;top:151px;" width="11" height="9" viewBox="0 0 11 9"><path d="M0 5.5L5.5 0L11 5.5V9L5.5 3.5L0 9z" fill="#606060"/></svg>
<svg style="left:560px;top:554px;" width="11" height="9" viewBox="0 0 11 9"><path d="M0 3.5L5.5 9L11 3.5V0L5.5 5.5L0 0z" fill="#606060"/></svg>
<div class="t" style="left:580px;top:116px;">Setting</div>
<div class="t" style="left:961px;top:116px;">State</div>
<div style="left:923px;top:111px;width:1px;height:24px;background:#e5e5e5"></div>
<div style="left:1023px;top:111px;width:1px;height:24px;background:#e5e5e5"></div>
<svg style="left:579px;top:137px;" width="13" height="15" viewBox="0 0 13 15"><path d="M0.5 0.5H10L12.5 3V14.5H0.5z" fill="#fff" stroke="#a8a8a8"/><path d="M0.5 14.5H12.5V3" fill="none" stroke="#7a7a7a"/><path d="M10 0.5V3H12.5" fill="none" stroke="#d0d0d0"/><rect x="3" y="4" width="2" height="2" fill="#000"/><rect x="3" y="7" width="2" height="2" fill="#9a94c4"/><rect x="3" y="10" width="2" height="2" fill="#000"/><path d="M6 5.5h4M6 8.5h4M6 11.5h4" stroke="#8a86b0"/></svg>
<div class="t" style="left:596px;top:138px;letter-spacing:0.036px;">Allow audio and video playback redirection</div>
<div class="t" style="left:933px;top:138px;letter-spacing:0.270px;">Not configured</div>
<svg style="left:579px;top:156px;" width="13" height="15" viewBox="0 0 13 15"><path d="M0.5 0.5H10L12.5 3V14.5H0.5z" fill="#fff" stroke="#a8a8a8"/><path d="M0.5 14.5H12.5V3" fill="none" stroke="#7a7a7a"/><path d="M10 0.5V3H12.5" fill="none" stroke="#d0d0d0"/><rect x="3" y="4" width="2" height="2" fill="#000"/><rect x="3" y="7" width="2" height="2" fill="#9a94c4"/><rect x="3" y="10" width="2" height="2" fill="#000"/><path d="M6 5.5h4M6 8.5h4M6 11.5h4" stroke="#8a86b0"/></svg>
<div class="t" style="left:596px;top:157px;letter-spacing:0.092px;">Allow audio recording redirection</div>
<div class="t" style="left:933px;top:157px;letter-spacing:0.270px;">Not configured</div>
<svg style="left:579px;top:175px;" width="13" height="15" viewBox="0 0 13 15"><path d="M0.5 0.5H10L12.5 3V14.5H0.5z" fill="#fff" stroke="#a8a8a8"/><path d="M0.5 14.5H12.5V3" fill="none" stroke="#7a7a7a"/><path d="M10 0.5V3H12.5" fill="none" stroke="#d0d0d0"/><rect x="3" y="4" width="2" height="2" fill="#000"/><rect x="3" y="7" width="2" height="2" fill="#9a94c4"/><rect x="3" y="10" width="2" height="2" fill="#000"/><path d="M6 5.5h4M6 8.5h4M6 11.5h4" stroke="#8a86b0"/></svg>
<div class="t" style="left:596px;top:176px;letter-spacing:0.091px;">Limit audio playback quality</div>
<div class="t" style="left:933px;top:176px;letter-spacing:0.270px;">Not configured</div>
<svg style="left:579px;top:194px;" width="13" height="15" viewBox="0 0 13 15"><path d="M0.5 0.5H10L12.5 3V14.5H0.5z" fill="#fff" stroke="#a8a8a8"/><path d="M0.5 14.5H12.5V3" fill="none" stroke="#7a7a7a"/><path d="M10 0.5V3H12.5" fill="none" stroke="#d0d0d0"/><rect x="3" y="4" width="2" height="2" fill="#000"/><rect x="3" y="7" width="2" height="2" fill="#9a94c4"/><rect x="3" y="10" width="2" height="2" fill="#000"/><path d="M6 5.5h4M6 8.5h4M6 11.5h4" stroke="#8a86b0"/></svg>
<div class="t" style="left:596px;top:195px;letter-spacing:0.045px;">Do not allow Clipboard redirection</div>
<div class="t" style="left:933px;top:195px;letter-spacing:0.270px;">Not configured</div>
<svg style="left:579px;top:213px;" width="13" height="15" viewBox="0 0 13 15"><path d="M0.5 0.5H10L12.5 3V14.5H0.5z" fill="#fff" stroke="#a8a8a8"/><path d="M0.5 14.5H12.5V3" fill="none" stroke="#7a7a7a"/><path d="M10 0.5V3H12.5" fill="none" stroke="#d0d0d0"/><rect x="3" y="4" width="2" height="2" fill="#000"/><rect x="3" y="7" width="2" height="2" fill="#9a94c4"/><rect x="3" y="10" width="2" height="2" fill="#000"/><path d="M6 5.5h4M6 8.5h4M6 11.5h4" stroke="#8a86b0"/></svg>
<div class="t" style="left:596px;top:214px;letter-spacing:0.061px;">Do not allow COM port redirection</div>
<div class="t" style="left:933px;top:214px;letter-spacing:0.270px;">Not configured</div>
<div style="left:594px;top:230px;width:436px;height:19px;background:#f0f0f0"></div>
<svg style="left:579px;top:232px;" width="13" height="15" viewBox="0 0 13 15"><defs><pattern id="dith" width="2" height="2" patternUnits="userSpaceOnUse"><rect width="2" height="2" fill="#fff"/><rect width="1" height="1" fill="#1a7fe0"/><rect x="1" y="1" width="1" height="1" fill="#1a7fe0"/></pattern></defs><path d="M0 0H11L13 2V15H0z" fill="url(#dith)"/><path d="M3 4l2 2M3 10l2 2" stroke="#222" stroke-width="1.2"/></svg>
<div class="t" style="left:596px;top:233px;letter-spacing:0.042px;">Do not allow drive redirection</div>
<div class="t" style="left:933px;top:233px;letter-spacing:0.270px;">Not configured</div>
<svg style="left:579px;top:251px;" width="13" height="15" viewBox="0 0 13 15"><path d="M0.5 0.5H10L12.5 3V14.5H0.5z" fill="#fff" stroke="#a8a8a8"/><path d="M0.5 14.5H12.5V3" fill="none" stroke="#7a7a7a"/><path d="M10 0.5V3H12.5" fill="none" stroke="#d0d0d0"/><rect x="3" y="4" width="2" height="2" fill="#000"/><rect x="3" y="7" width="2" height="2" fill="#9a94c4"/><rect x="3" y="10" width="2" height="2" fill="#000"/><path d="M6 5.5h4M6 8.5h4M6 11.5h4" stroke="#8a86b0"/></svg>
<div class="t" style="left:596px;top:252px;letter-spacing:0.014px;">Do not allow LPT port redirection</div>
<div class="t" style="left:933px;top:252px;letter-spacing:0.270px;">Not configured</div>
<svg style="left:579px;top:270px;" width="13" height="15" viewBox="0 0 13 15"><path d="M0.5 0.5H10L12.5 3V14.5H0.5z" fill="#fff" stroke="#a8a8a8"/><path d="M0.5 14.5H12.5V3" fill="none" stroke="#7a7a7a"/><path d="M10 0.5V3H12.5" fill="none" stroke="#d0d0d0"/><rect x="3" y="4" width="2" height="2" fill="#000"/><rect x="3" y="7" width="2" height="2" fill="#9a94c4"/><rect x="3" y="10" width="2" height="2" fill="#000"/><path d="M6 5.5h4M6 8.5h4M6 11.5h4" stroke="#8a86b0"/></svg>
<div class="t" style="left:596px;top:271px;letter-spacing:-0.018px;">Do not allow supported Plug and Play device redirection</div>
<div class="t" style="left:933px;top:271px;letter-spacing:0.270px;">Not configured</div>
<svg style="left:579px;top:289px;" width="13" height="15" viewBox="0 0 13 15"><path d="M0.5 0.5H10L12.5 3V14.5H0.5z" fill="#fff" stroke="#a8a8a8"/><path d="M0.5 14.5H12.5V3" fill="none" stroke="#7a7a7a"/><path d="M10 0.5V3H12.5" fill="none" stroke="#d0d0d0"/><rect x="3" y="4" width="2" height="2" fill="#000"/><rect x="3" y="7" width="2" height="2" fill="#9a94c4"/><rect x="3" y="10" width="2" height="2" fill="#000"/><path d="M6 5.5h4M6 8.5h4M6 11.5h4" stroke="#8a86b0"/></svg>
<div class="t" style="left:596px;top:290px;letter-spacing:-0.025px;">Do not allow smart card device redirection</div>
<div class="t" style="left:933px;top:290px;letter-spacing:0.270px;">Not configured</div>
<svg style="left:579px;top:308px;" width="13" height="15" viewBox="0 0 13 15"><path d="M0.5 0.5H10L12.5 3V14.5H0.5z" fill="#fff" stroke="#a8a8a8"/><path d="M0.5 14.5H12.5V3" fill="none" stroke="#7a7a7a"/><path d="M10 0.5V3H12.5" fill="none" stroke="#d0d0d0"/><rect x="3" y="4" width="2" height="2" fill="#000"/><rect x="3" y="7" width="2" height="2" fill="#9a94c4"/><rect x="3" y="10" width="2" height="2" fill="#000"/><path d="M6 5.5h4M6 8.5h4M6 11.5h4" stroke="#8a86b0"/></svg>
<div class="t" style="left:596px;top:309px;letter-spacing:0.076px;">Allow time zone redirection</div>
<div class="t" style="left:933px;top:309px;letter-spacing:0.270px;">Not configured</div>
<div style="left:574px;top:564px;width:456px;height:16px;background:#f0f0f0"></div>
<div style="left:591px;top:564px;width:341px;height:15px;background:#cdcdcd"></div>
<svg style="left:579px;top:568px;" width="6" height="7" viewBox="0 0 6 7"><path d="M5 0.8L1.6 3.5L5 6.2" fill="none" stroke="#606060" stroke-width="2"/></svg>
<svg style="left:360px;top:580px;" width="670" height="21" viewBox="0 0 670 21"><rect x="0" y="0" width="670" height="21" fill="#f0f0f0"/><path d="M0 0.5H670" stroke="#c8c8c8"/><path d="M72.3 2.5H670" stroke="#6a6a6a"/><path d="M72.3 2.5L69 10.7L74 20.2H125.5L133.4 2.5" fill="#f0f0f0" stroke="#6a6a6a"/><path d="M0 2L8.6 20.3H64.2L72.3 2z" fill="#fff" stroke="#6a6a6a"/><path d="M0 2H72" stroke="#fff" stroke-width="2"/><path d="M0 20.5H670" stroke="#d8d8d8"/><path d="M8.6 20.5H64.2M74 20.5H125.5" stroke="#a0a0a0"/></svg>
<div class="t" style="left:373px;top:585px;letter-spacing:-0.570px;">Extended</div>
<div class="t" style="left:436px;top:585px;letter-spacing:-0.200px;">Standard</div>
<div style="left:2px;top:601px;width:1028px;height:23px;background:#f0f0f0"></div>
<div class="t" style="left:5px;top:607px;letter-spacing:-0.240px;">10 setting(s)</div>
<div style="left:842px;top:603px;width:1px;height:21px;background:#d7d7d7"></div>
<div style="left:976px;top:603px;width:1px;height:21px;background:#d7d7d7"></div>
<div style="left:1716px;top:0px;width:1px;height:634px;background:#0a2a50"></div>
<div style="left:1030px;top:633px;width:687px;height:1px;background:#0a2a50"></div>
<div style="left:1030px;top:0px;width:686px;height:633px;background:#fff;border:1px solid #1a7ad8"></div>
<div style="left:1032px;top:31px;width:682px;height:600px;background:#f0f0f0"></div>
<svg style="left:1038px;top:7px;" width="18" height="17" viewBox="0 0 18 17"><defs><linearGradient id="scr" x1="0" y1="0" x2="1" y2="0"><stop offset="0" stop-color="#0000c8"/><stop offset="0.5" stop-color="#1a30e0"/><stop offset="0.7" stop-color="#b8c4ff"/><stop offset="1" stop-color="#6a80f0"/></linearGradient></defs><rect x="4.5" y="1.5" width="12" height="10" fill="#dcdad0" stroke="#b8b6aa"/><rect x="6" y="3" width="9" height="7" fill="url(#scr)"/><path d="M9 12h5v2.5h-5z" fill="#b0b0a8"/><path d="M7 14.5h8" stroke="#c8c8c0"/><ellipse cx="4.8" cy="7.2" rx="2.8" ry="3.6" fill="#b87850"/><path d="M2 6.5c0-3.5 5.6-3.5 5.6 0c-1-1.5-4.6-1.5-5.6 0z" fill="#505050"/><path d="M0.5 16.5c0-3.5 1.8-5.5 4.3-5.5s4.3 2 4.3 5.5z" fill="#8cbce8" stroke="#6a9ac8" stroke-width="0.6"/></svg>
<div class="t" style="left:1060px;top:9px;letter-spacing:0.042px;">Do not allow drive redirection</div>
<div style="left:1596px;top:15px;width:10px;height:1px;background:#c8c8c8"></div>
<div style="left:1641px;top:10px;width:10px;height:10px;border:1px solid #111"></div>
<svg style="left:1687px;top:10px;" width="10" height="10" viewBox="0 0 10 10"><path d="M0.5 0.5L9.5 9.5M9.5 0.5L0.5 9.5" stroke="#000" stroke-width="1.1"/></svg>
<svg style="left:1037px;top:45px;" width="16" height="16" viewBox="0 0 16 16"><rect x="0" y="0" width="16" height="16" fill="#404040"/><rect x="0" y="0" width="3" height="4" fill="#0a8a8a"/><rect x="13" y="0" width="3" height="4" fill="#0a8a8a"/><rect x="13" y="6" width="3" height="10" fill="#0a8a8a"/><rect x="3" y="0" width="10" height="3" fill="#9a98d0"/><rect x="1" y="3" width="14" height="1" fill="#6a5aa8"/><rect x="3" y="4" width="6" height="2" fill="#4a8a5a"/><rect x="9" y="4" width="4" height="2" fill="#f0c020"/><circle cx="5" cy="10.5" r="4" fill="#f4f4ff"/><circle cx="5" cy="10.5" r="1" fill="#333"/><rect x="9" y="6" width="4" height="9" fill="#fff4c0"/><path d="M10 9.5h2M10 11.5h2" stroke="#5a5a8a"/></svg>
<div class="t" style="left:1061px;top:44px;letter-spacing:0.042px;">Do not allow drive redirection</div>
<div style="left:1406px;top:46px;width:101px;height:26px;background:#e1e1e1;border:1px solid #adadad"></div>
<div class="t" style="left:1414px;top:52px;letter-spacing:-0.166px;">Previous Setting</div>
<div style="left:1515px;top:46px;width:101px;height:26px;background:#e1e1e1;border:1px solid #adadad"></div>
<div class="t" style="left:1533px;top:52px;letter-spacing:-0.045px;">Next Setting</div>
<div style="left:1040px;top:92px;width:13px;height:13px;border:1px solid #333;border-radius:50%;background:#fff"></div>
<div style="left:1043px;top:95px;width:7px;height:7px;border-radius:50%;background:#333"></div>
<div class="t" style="left:1057px;top:92px;">Not Configured</div>
<div style="left:1040px;top:120px;width:13px;height:13px;border:1px solid #333;border-radius:50%;background:#fff"></div>
<div class="t" style="left:1057px;top:120px;">Enabled</div>
<div style="left:1040px;top:148px;width:13px;height:13px;border:1px solid #333;border-radius:50%;background:#fff"></div>
<div class="t" style="left:1057px;top:148px;">Disabled</div>
<div class="t" style="left:1162px;top:87px;">Comment:</div>
<div style="left:1248px;top:88px;width:458px;height:72px;background:#fff;border:1px solid #828282"></div>
<div style="left:1688px;top:90px;width:17px;height:68px;background:#f0f0f0"></div>
<svg style="left:1692px;top:97px;" width="8" height="6" viewBox="0 0 8 6"><path d="M0.8 5L4 1.5L7.2 5" fill="none" stroke="#b4b4b4" stroke-width="1.8"/></svg>
<svg style="left:1692px;top:147px;" width="8" height="6" viewBox="0 0 8 6"><path d="M0.8 1L4 4.5L7.2 1" fill="none" stroke="#b4b4b4" stroke-width="1.8"/></svg>
<div class="t" style="left:1162px;top:165px;">Supported on:</div>
<div style="left:1248px;top:166px;width:458px;height:46px;background:#f0f0f0;border:1px solid #828282"></div>
<div style="left:1687px;top:167px;width:1px;height:44px;background:#fff"></div>
<svg style="left:1692px;top:174px;" width="8" height="6" viewBox="0 0 8 6"><path d="M0.8 5L4 1.5L7.2 5" fill="none" stroke="#b4b4b4" stroke-width="1.8"/></svg>
<svg style="left:1692px;top:199px;" width="8" height="6" viewBox="0 0 8 6"><path d="M0.8 1L4 4.5L7.2 1" fill="none" stroke="#b4b4b4" stroke-width="1.8"/></svg>
<div class="t" style="left:1254px;top:170px;letter-spacing:-0.195px;">At least Windows Server 2003 operating systems or Windows XP Professional</div>
<div class="t" style="left:1036px;top:226px;">Options:</div>
<div class="t" style="left:1342px;top:226px;">Help:</div>
<div style="left:1034px;top:261px;width:298px;height:320px;background:#fff;border:1px solid #828282"></div>
<div style="left:1340px;top:261px;width:353px;height:320px;background:#fff;border:1px solid #828282"></div>
<div style="left:1341px;top:262px;width:351px;height:318px;overflow:hidden">
<div class="t" style="left:4px;top:2px;letter-spacing:0.015px;">This policy setting specifies whether to prevent the mapping of</div>
<div class="t" style="left:4px;top:17px;letter-spacing:-0.198px;">client drives in a Remote Desktop Services session (drive</div>
<div class="t" style="left:4px;top:32px;letter-spacing:0.099px;">redirection).</div>
<div class="t" style="left:4px;top:62px;letter-spacing:-0.226px;">By default, an RD Session Host server maps client drives</div>
<div class="t" style="left:4px;top:77px;letter-spacing:0.045px;">automatically upon connection. Mapped drives appear in the</div>
<div class="t" style="left:4px;top:92px;letter-spacing:-0.072px;">session folder tree in File Explorer or Computer in the format</div>
<div class="t" style="left:4px;top:107px;letter-spacing:0.076px;">&lt;driveletter&gt; on &lt;computername&gt;. You can use this policy</div>
<div class="t" style="left:4px;top:122px;letter-spacing:0.015px;">setting to override this behavior.</div>
<div class="t" style="left:4px;top:152px;">If you enable this policy setting, client drive redirection is not</div>
<div class="t" style="left:4px;top:167px;letter-spacing:-0.170px;">allowed in Remote Desktop Services sessions, and Clipboard file</div>
<div class="t" style="left:4px;top:182px;letter-spacing:0.060px;">copy redirection is not allowed on computers running Windows</div>
<div class="t" style="left:4px;top:197px;letter-spacing:-0.249px;">Server 2003, Windows 8, and Windows XP.</div>
<div class="t" style="left:4px;top:227px;letter-spacing:-0.023px;">If you disable this policy setting, client drive redirection is always</div>
<div class="t" style="left:4px;top:242px;letter-spacing:-0.010px;">allowed. In addition, Clipboard file copy redirection is always</div>
<div class="t" style="left:4px;top:257px;letter-spacing:0.040px;">allowed if Clipboard redirection is allowed.</div>
<div class="t" style="left:4px;top:287px;letter-spacing:0.073px;">If you do not configure this policy setting, client drive redirection</div>
<div class="t" style="left:4px;top:302px;letter-spacing:-0.016px;">and Clipboard file copy redirection are not specified at the Group</div>
</div>
<div style="left:1694px;top:261px;width:16px;height:320px;background:#f0f0f0"></div>
<div style="left:1694px;top:278px;width:15px;height:260px;background:#cdcdcd"></div>
<svg style="left:1698px;top:267px;" width="8" height="6" viewBox="0 0 8 6"><path d="M0.8 5L4 1.5L7.2 5" fill="none" stroke="#606060" stroke-width="1.8"/></svg>
<svg style="left:1698px;top:570px;" width="8" height="6" viewBox="0 0 8 6"><path d="M0.8 1L4 4.5L7.2 1" fill="none" stroke="#606060" stroke-width="1.8"/></svg>
<div style="left:1470px;top:596px;width:73px;height:26px;background:#e1e1e1;border:1px solid #adadad"></div>
<div class="t" style="left:1498px;top:602px;">OK</div>
<div style="left:1551px;top:596px;width:73px;height:26px;background:#e1e1e1;border:2px solid #0078d7"></div>
<div class="t" style="left:1570px;top:602px;letter-spacing:-0.400px;">Cancel</div>
<div style="left:1632px;top:596px;width:73px;height:26px;background:#cccccc;border:1px solid #bfbfbf"></div>
<div class="t" style="left:1654px;top:602px;color:#a0a0a0">Apply</div>
</body></html>
